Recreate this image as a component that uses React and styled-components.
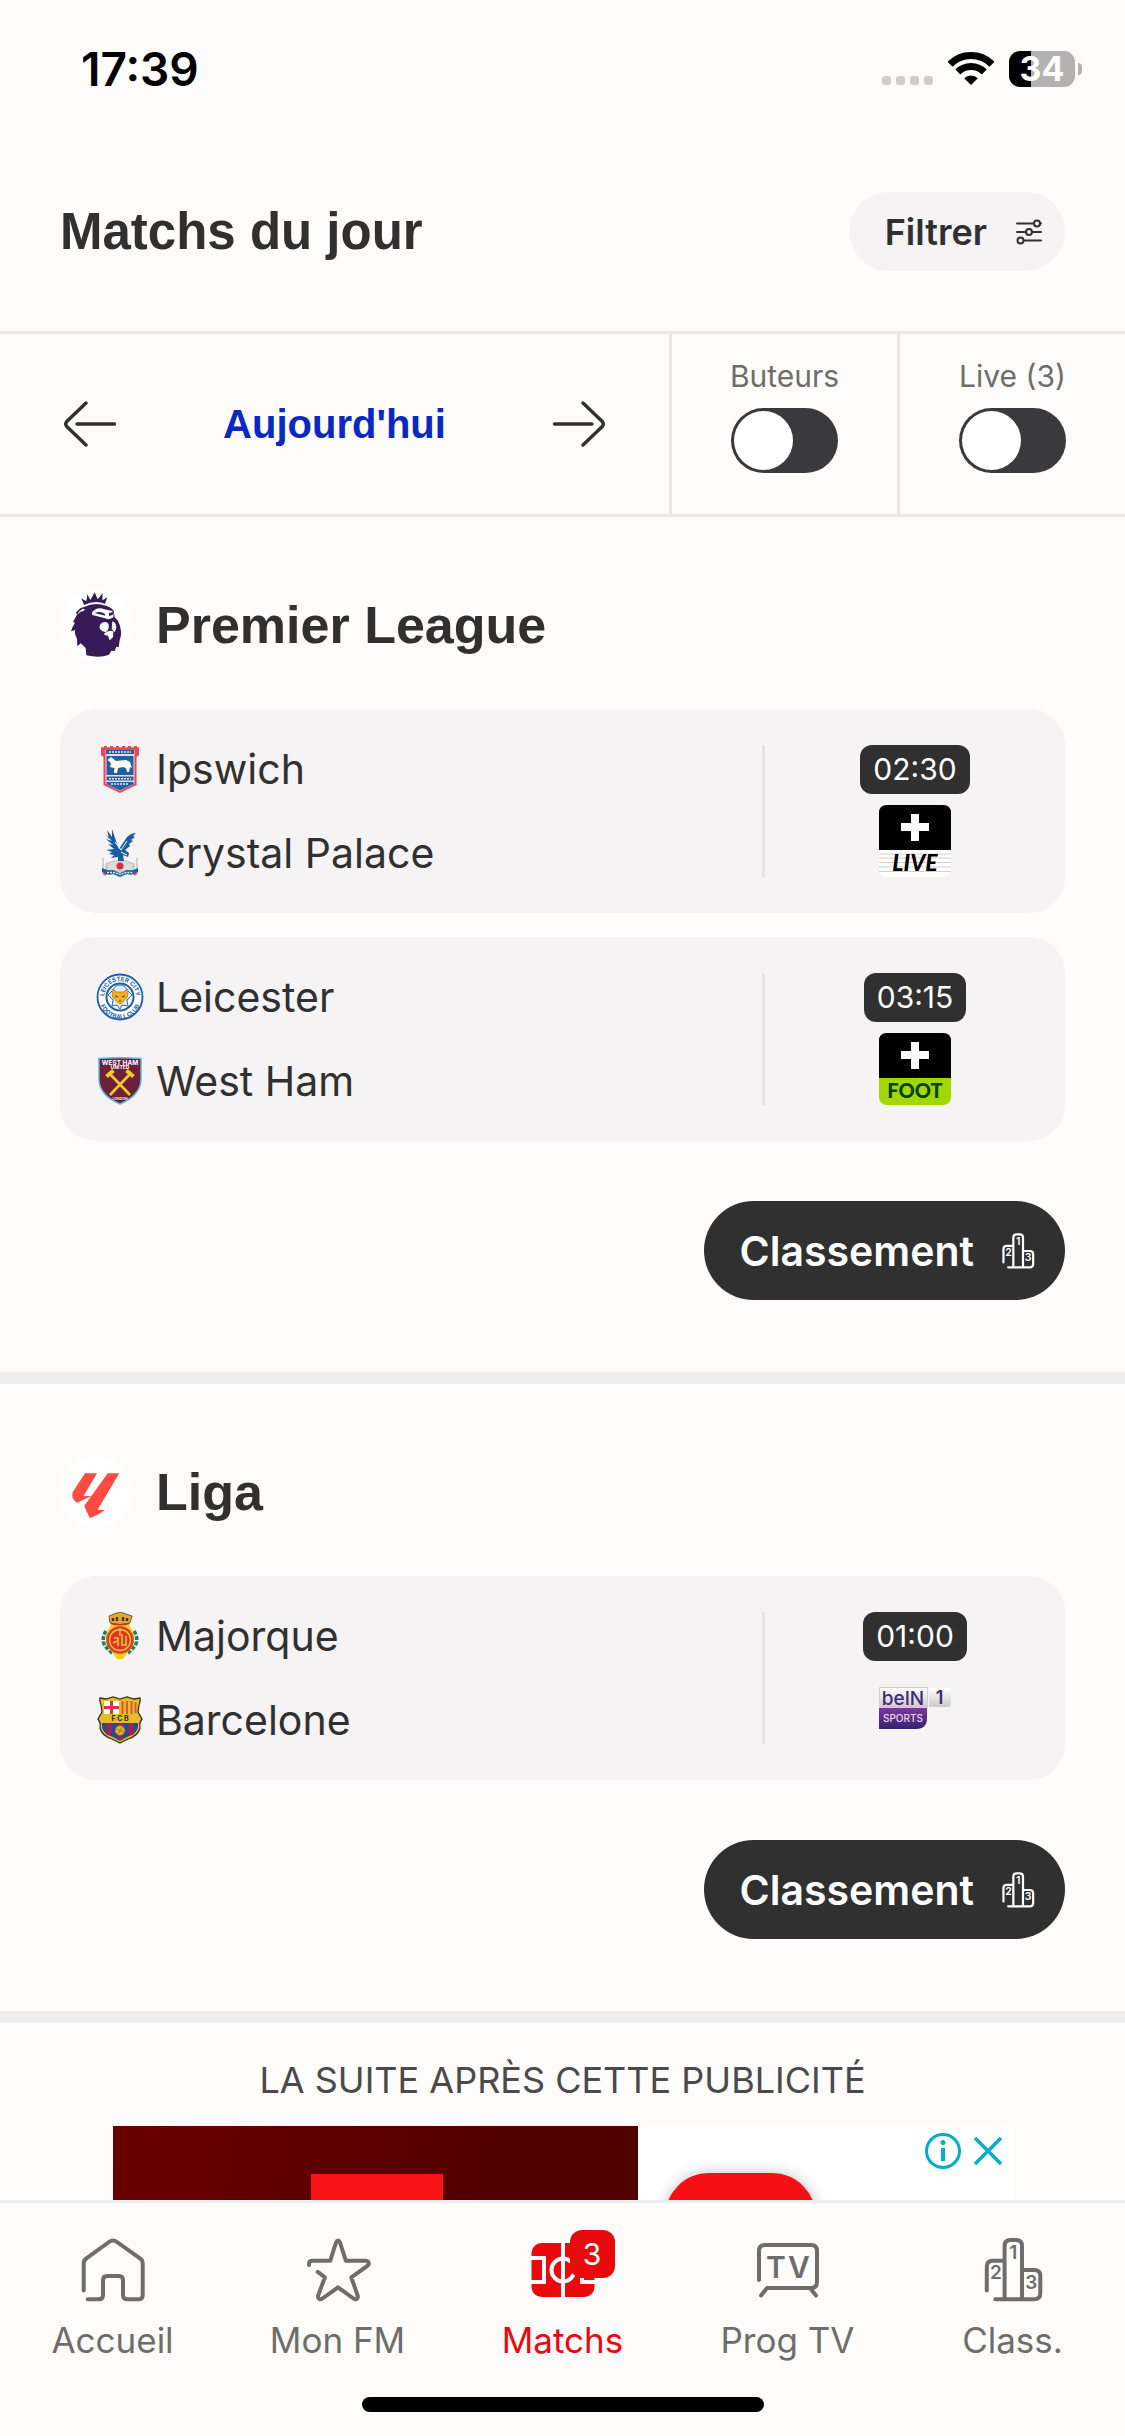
import React, { useState } from "react";
import styled, { createGlobalStyle } from "styled-components";

const ink = "#303030";
const paper = "#fdfcfb";
const card = "#f5f3f4";
const line = "#e8e8e7";
const muted = "#6d6d6c";
const red = "#ea0a0d";
const ui = `Inter, "Liberation Sans", sans-serif`;
const display = `"Liberation Sans", Inter, sans-serif`;

const GlobalStyle = createGlobalStyle`
  *, *::before, *::after { box-sizing: border-box; }
  body { margin: 0; background: ${paper}; color: ${ink}; font-family: ${ui}; }
  button { border: 0; padding: 0; background: none; color: inherit; font: inherit; cursor: pointer; }
  h1, h2, p, ul { margin: 0; padding: 0; }
  a { color: inherit; text-decoration: none; }
  svg { display: block; flex: none; }
`;

const Screen = styled.div`
  display: flex;
  flex-direction: column;
  height: 100vh;
  overflow: hidden;
`;

const StatusBar = styled.div`
  display: flex;
  align-items: center;
  justify-content: space-between;
  flex: none;
  height: 132px;
  padding: 6px 43px 0 81px;
  color: #000;
`;

const Clock = styled.span`
  font-size: 46px;
  font-weight: 600;
`;

const StatusIcons = styled.div`
  display: flex;
  align-items: center;
  gap: 15px;
`;

const Battery = styled.div`
  display: flex;
  align-items: center;
  gap: 3px;

  &::after {
    content: "";
    width: 4px;
    height: 12px;
    border-radius: 0 6px 6px 0;
    background: #b3b1b1;
  }
`;

const BatteryLevel = styled.span`
  width: 66px;
  border-radius: 11px;
  background: linear-gradient(to right, #000 ${(p) => p.$level}%, #b3b1b1 ${(p) => p.$level}%);
  color: #fff;
  font-size: 34px;
  font-weight: 700;
  line-height: 36px;
  text-align: center;
`;

const Header = styled.header`
  display: flex;
  align-items: center;
  justify-content: space-between;
  flex: none;
  padding: 60px;
`;

const PageTitle = styled.h1`
  font-family: ${display};
  font-size: 51px;
  font-weight: 700;
  line-height: 60px;
`;

const FilterButton = styled.button`
  display: flex;
  align-items: center;
  gap: 28px;
  height: 79px;
  padding: 0 22px 0 36px;
  border-radius: 40px;
  background: ${card};
  font-size: 36px;
  font-weight: 600;
`;

const Toolbar = styled.div`
  display: flex;
  flex: none;
  height: 186px;
  border-top: 3px solid ${line};
  border-bottom: 3px solid ${line};
`;

const DatePicker = styled.div`
  display: flex;
  flex: 1;
  align-items: center;
  justify-content: space-between;
  padding: 0 63px;
`;

const CurrentDay = styled.button`
  color: #0a28c2;
  font-family: ${display};
  font-size: 40px;
  font-weight: 700;
`;

const ToggleCell = styled.label`
  display: flex;
  flex-direction: column;
  align-items: center;
  gap: 14px;
  width: 228px;
  padding-top: 24px;
  border-left: 3px solid ${line};
  color: ${muted};
  font-size: 30px;
  line-height: 36px;
`;

const Switch = styled.input`
  appearance: none;
  width: 107px;
  height: 65px;
  margin: 0;
  padding: 3px;
  border-radius: 33px;
  background: #3a3a3c;
  cursor: pointer;

  &::before {
    content: "";
    display: block;
    width: 59px;
    height: 59px;
    border-radius: 50%;
    background: #fff;
  }

  &:checked::before {
    margin-left: auto;
  }
`;

const Feed = styled.main`
  flex: 1;
  min-height: 0;
  overflow: hidden;
`;

const League = styled.section`
  display: flex;
  flex-direction: column;
  padding: 72px 60px;
  border-bottom: 12px solid #eeeeee;
`;

const LeagueHeader = styled.div`
  display: flex;
  align-items: center;
  gap: 24px;
  margin-bottom: 48px;
`;

const LeagueLogo = styled.div`
  width: 72px;
  height: 72px;
  border-radius: 50%;
  background: #fff;
`;

const LeagueName = styled.h2`
  font-family: ${display};
  font-size: 52px;
  font-weight: 700;
  line-height: 60px;
`;

const MatchList = styled.ul`
  display: flex;
  flex-direction: column;
  gap: 24px;
  list-style: none;
`;

const MatchCard = styled.li`
  display: flex;
  padding: 36px 0;
  border-radius: 36px;
  background: ${card};
`;

const Teams = styled.div`
  display: flex;
  flex: 1;
  flex-direction: column;
  gap: 36px;
  padding-left: 36px;
`;

const Team = styled.div`
  display: flex;
  align-items: center;
  gap: 12px;
  height: 48px;
  font-size: 41px;
`;

const Broadcast = styled.div`
  display: flex;
  flex-direction: column;
  align-items: center;
  justify-content: space-between;
  width: 303px;
  border-left: 3px solid #e5e4e5;
`;

const KickOff = styled.time`
  padding: 0 13px;
  border-radius: 12px;
  background: ${ink};
  color: #fff;
  font-size: 30px;
  line-height: 49px;
`;

const StandingsButton = styled.button`
  display: flex;
  align-items: center;
  align-self: flex-end;
  gap: 24px;
  height: 99px;
  margin-top: 60px;
  padding: 0 27px 0 36px;
  border-radius: 50px;
  background: ${ink};
  color: #fff;
  font-size: 41px;
  font-weight: 600;
`;

const AdSection = styled.aside`
  display: flex;
  flex-direction: column;
  align-items: center;
  gap: 24px;
  padding-top: 36px;
`;

const AdNotice = styled.p`
  color: #4a4a4a;
  font-size: 36px;
  line-height: 43px;
`;

const AdBanner = styled.div`
  display: flex;
  width: 900px;
  height: 300px;
  background: #fff;
`;

const AdPoster = styled.div`
  width: 525px;
  padding: 48px 195px 0 198px;
  background: linear-gradient(100deg, #6a0000, #520000 70%);

  &::before {
    content: "";
    display: block;
    height: 132px;
    background: #f81214;
  }
`;

const AdBody = styled.div`
  display: flex;
  flex: 1;
  align-items: flex-start;
  justify-content: space-between;
  padding-left: 27px;
`;

const AdLogo = styled.div`
  width: 151px;
  height: 151px;
  margin-top: 47px;
  border-radius: 44px;
  background: #f51113;
  box-shadow: 0 0 14px rgba(0, 0, 0, 0.25);
`;

const AdControls = styled.div`
  display: flex;
  gap: 12px;
  padding: 7px 10px 0 0;
`;

const BottomNav = styled.nav`
  display: flex;
  flex: none;
  flex-direction: column;
  align-items: center;
  gap: 33px;
  padding: 31px 0 24px;
  border-top: 3px solid #eeeded;
  background: ${paper};
`;

const Tabs = styled.div`
  display: flex;
  align-self: stretch;
`;

const Tab = styled.a`
  display: flex;
  flex: 1;
  flex-direction: column;
  align-items: center;
  gap: 10px;
  color: ${(p) => (p.$active ? red : muted)};
  font-size: 35px;
  line-height: 48px;
`;

const TabIcon = styled.span`
  position: relative;
`;

const Badge = styled.span`
  position: absolute;
  top: -4px;
  left: 43px;
  width: 45px;
  border-radius: 12px;
  background: ${red};
  color: #fff;
  font-size: 30px;
  line-height: 48px;
  text-align: center;
`;

const HomeIndicator = styled.div`
  width: 402px;
  height: 15px;
  border-radius: 8px;
  background: #000;
`;

const IconText = styled.text`
  font-family: ${ui};
  font-weight: ${(p) => p.$weight || 600};
  text-anchor: middle;
`;

const ChannelText = styled.text`
  font-family: Lato, ${ui};
  font-weight: 900;
  text-anchor: middle;
`;

/* ---------- system icons ---------- */

const SignalDots = () => (
  <svg width="51" height="36" viewBox="0 0 51 36" fill="#cfcdcd">
    {[0, 14, 28, 42].map((x) => (
      <rect key={x} x={x} y="25" width="9" height="9" rx="3" />
    ))}
  </svg>
);

const WifiIcon = () => (
  <svg width="46" height="36" viewBox="0 0 46 36" fill="none" stroke="#000" strokeWidth="7">
    <path d="M2 13.2A29.6 29.6 0 0 1 44 13.2" />
    <path d="M9.8 21A18.6 18.6 0 0 1 36.2 21" />
    <path d="M23 34L16.2 27.2A9.6 9.6 0 0 1 29.8 27.2Z" fill="#000" stroke="none" />
  </svg>
);

const SlidersIcon = () => (
  <svg width="28" height="28" viewBox="0 0 28 28" fill="none" stroke={ink} strokeWidth="2" strokeLinecap="round">
    <path d="M2 5.5H18.5M25.5 5.5H26M2 14H10.5M17.5 14H26M9.5 22.5H26" />
    <circle cx="22" cy="5.5" r="3" />
    <circle cx="14" cy="14" r="3" />
    <circle cx="5.5" cy="22.5" r="3" />
  </svg>
);

const ArrowIcon = ({ flip }) => (
  <svg width="54" height="48" viewBox="0 0 54 48" fill="none" stroke={ink} strokeWidth="3.4" strokeLinecap="round">
    <g transform={flip ? "matrix(-1 0 0 1 54 0)" : undefined}>
      <path d="M23 3L4 21.3Q1.4 24 4 26.7L23 45M14 24H51.500" />
    </g>
  </svg>
);

/* ---------- navigation icons ---------- */

const stroke = { fill: "none", stroke: "currentColor", strokeWidth: 4, strokeLinecap: "round", strokeLinejoin: "round" };

const HomeIcon = () => (
  <svg width="72" height="72" viewBox="0 0 72 72" {...stroke}>
    <path d="M6.700 56.600V29.500Q6.700 26.500 9 24.700L32 8Q36 5 40 8L63.300 24.700Q65.700 26.500 65.700 29.500V61Q65.700 65.300 61.400 65.300H50.300Q46 65.300 46 61V46.300Q46 42 41.700 42H30.300Q26 42 26 46.300V61Q26 65.300 21.700 65.300H10.700" />
  </svg>
);

const StarIcon = () => (
  <svg width="72" height="72" viewBox="0 0 72 72" {...stroke}>
    <path d="M7 31V30Q7 26.700 10.500 26.700H28.300L34 8.500Q36 4.500 38 8.500L43.800 26.700H63.500Q67 27 66.800 30Q66.600 31 64.500 32.500L49.300 43.300L55.800 62Q56 67 51.500 64.500L36 53.300L20.500 64.500Q16 67 16 62L22.900 43.300L15.700 37.800" />
  </svg>
);

const PitchIcon = () => (
  <svg width="72" height="72" viewBox="0 0 72 72">
    <rect x="4.500" y="9" width="63" height="54" rx="10" fill={red} />
    <g fill="none" stroke={paper} strokeWidth="4">
      <path d="M36 8V64M4 24H17V48H4M68 24H55V48H68" />
      <circle cx="36" cy="36" r="11.500" />
    </g>
  </svg>
);

const TvIcon = () => (
  <svg width="72" height="72" viewBox="0 0 72 72" {...stroke}>
    <path d="M7 46V17Q7 11 13 11H59Q65 11 65 17V48Q65 54 59 54H15L9 61.500M58 54L64 61.500" />
    <g fill="currentColor" stroke="none" fontSize="30">
      <IconText x="24" y="44">T</IconText>
      <IconText x="47" y="44">V</IconText>
    </g>
  </svg>
);

const PodiumIcon = ({ size = 72 }) => (
  <svg width={size} height={size} viewBox="0 0 72 72" {...stroke}>
    <path d="M9.800 56.500V32.700Q9.800 26.700 15.800 26.700H27.600M27.600 65.300V12Q27.600 6 33.600 6H39Q45 6 45 12V65.300M45 36H57.300Q63.300 36 63.300 42V59.300Q63.300 65.300 57.300 65.300H18.300" />
    <g fill="currentColor" stroke="none" fontSize="19">
      <IconText x="36.300" y="25">1</IconText>
      <IconText x="18.800" y="45">2</IconText>
      <IconText x="54.200" y="54.500">3</IconText>
    </g>
  </svg>
);

/* ---------- league logos ---------- */

const PremierLeagueLogo = () => (
  <svg width="72" height="72" viewBox="30 27 216 216">
    <g fill="#371b58">
      <path d="M102 75L94 55L109 64L112 43L121 60L134 37L143 58L158 40L157 61L172 52L165 71Q134 59 102 75Z" />
      <path d="M104 80Q134 66 168 77Q184 82 191 92L194 112L204 122Q215 146 213 166L209 181L206 202L199 200L194 213L184 212L177 224Q150 235 109 226L107 204L92 190L82 199L81 176L75 162V150L63 154Q67 139 75 128L69 126L82 102L77 98L92 84Z" />
    </g>
    <g fill="#fff">
      <path d="M131 92Q145 80 163 88L187 93Q193 103 190 112Q178 121 165 115L142 109L127 105Q122 97 131 92Z" />
      <path d="M151 133Q163 121 174 130Q179 138 174 150L167 157Q156 156 151 148Q146 140 151 133Z" />
      <path d="M187 124Q198 126 199 144L194 157L185 147Z" />
      <path d="M163 160Q176 149 190 154L189 172L179 181L174 167L163 164Z" />
      <path d="M98 86L105 88L100 93L92 95L83 103L86 96Z" />
    </g>
    <path d="M134 99Q151 92 164 101L166 107L149 103ZM177 99L190 96L188 105L177 108Z" fill="#371b58" />
  </svg>
);

const LigaLogo = () => (
  <svg width="72" height="72" viewBox="0 0 72 72" fill="#ff4b44">
    <path d="M25 17.300H37L23.500 40H31.500L25 43L17.200 46.700Q11 43 12.500 36.500Z" />
    <path d="M47.700 17.300H59.200L37.500 54H45L38 58.500L29.800 62.300L24.400 50.600Q24.500 48.500 26.200 47.300Z" />
  </svg>
);

/* ---------- club crests ---------- */

const IpswichCrest = () => (
  <svg width="48" height="48" viewBox="0 0 48 48">
    <path d="M5 1H43V10L40.500 12V40L24 48L7.500 40V12L5 10Z" fill="#ef4358" />
    <path d="M5 1.500H43" stroke="#fff" strokeWidth="1.500" strokeDasharray="3 3" />
    <path d="M9.500 5H38.500V38.500L24 46L9.500 38.500Z" fill="#f6d6dc" />
    <path d="M10 5H38V9H10ZM10.500 11H37.500V30H10.500ZM10.500 31.500H37.500V35.500H10.500ZM10.500 37H37.500V39L24 45.500L10.500 39Z" fill="#2260a5" />
    <path d="M11.500 15L15 12L20 16L30 15L34 17L36 23L34 22L33 27H31L30 23L27 22L22 23L21 28H18L18.500 23L14 22L15 18Z" fill="#fff" />
    <path d="M13 7H35M13 33.700H35M15 39H33" stroke="#dce9f5" strokeWidth="1.500" strokeDasharray="2 1" />
  </svg>
);

const CrystalPalaceCrest = () => (
  <svg width="48" height="48" viewBox="0 0 48 48">
    <path d="M7 29V40M11 34V40M37 34V40M41 29V40M10 35Q24 28 38 35V42H10Z" fill="#dedbdc" stroke="#c9c6c8" strokeWidth="1.500" />
    <g fill="#1b5b9f">
      <path d="M9 5L13 10L11 1L16 8L16 0L20 12L23 20L29 11Q33 4 40 4L37 7L39 8L35 11L37 12L33 15L34 17L29 21L33 24L32 28L27 26L28 32H22V28L15 29L18 26L13 25L16 23L10 21L18 20L12 15L17 16L10 10L16 12Z" />
      <path d="M6 39Q12 42 17 41L24 44L31 41Q37 42 42 39V43Q36 47 31 45L24 48L17 45Q11 47 6 43Z" />
    </g>
    <path d="M19 13L25 21L31 12M25 23L31 26" fill="none" stroke="#fff" strokeWidth="1" />
    <circle cx="24" cy="37" r="3.500" fill="#dc2c3b" />
    <path d="M11 43.500H18L24 45.500L30 43.500H37" fill="none" stroke="#e6eef8" strokeWidth="1.400" strokeDasharray="2 1" />
    <path d="M7 44L10 46M38 46L41 44" stroke="#e34a55" strokeWidth="2" />
  </svg>
);

const LeicesterCrest = () => (
  <svg width="48" height="48" viewBox="0 0 48 48">
    <defs>
      <path id="leicester-top" d="M8 24A16 16 0 0 1 40 24" />
      <path id="leicester-bottom" d="M3.200 25A20.800 20.800 0 0 0 44.800 25" />
    </defs>
    <circle cx="24" cy="24" r="22.500" fill="#fff" stroke="#1c5fae" strokeWidth="1.800" />
    <circle cx="24" cy="24" r="13.500" fill="#fff" stroke="#1c5fae" strokeWidth="2" />
    <path d="M24 12Q29 12 31 17L36 22L31 27L32 33L26 32L24 36L21 32L16 33L17 27L12 22L17 17Q19 12 24 12Z" fill="#dbe8f5" stroke="#2a68b0" strokeWidth="1" />
    <path d="M16 16L21 19H27L32 16L31.500 24L27 29L24 31L21 29L16.500 24Z" fill="#eeb01d" stroke="#a36c1a" strokeWidth="0.600" />
    <path d="M19 23L22 24M29 23L26 24M23 28H25" stroke="#5c3f1d" strokeWidth="1" />
    <g fill="#1c5fae" fontSize="6">
      <IconText $weight={700}><textPath href="#leicester-top" startOffset="50%">LEICESTER CITY</textPath></IconText>
      <IconText $weight={700}><textPath href="#leicester-bottom" startOffset="50%">FOOTBALL CLUB</textPath></IconText>
    </g>
  </svg>
);

const WestHamCrest = () => (
  <svg width="48" height="48" viewBox="0 0 48 48">
    <path d="M3 1.500Q24 0 45 1.500V22Q45 38 24 47Q3 38 3 22Z" fill="#6d2038" stroke="#5fb5e2" strokeWidth="1.500" />
    <path d="M14 17L34 38M34 17L14 38" stroke="#f3c92b" strokeWidth="2.600" />
    <path d="M10.500 19.500L17.500 13.500M37.500 19.500L30.500 13.500" stroke="#f3c92b" strokeWidth="4" />
    <g fill="#fff">
      <IconText x="24" y="7.500" fontSize="6.500" $weight={700}>WEST HAM</IconText>
      <IconText x="24" y="12" fontSize="5" $weight={700}>UNITED</IconText>
      <IconText x="24" y="42.500" fontSize="3.500">LONDON</IconText>
    </g>
  </svg>
);

const MajorqueCrest = () => (
  <svg width="48" height="48" viewBox="0 0 48 48">
    <path d="M10 19Q5 27 9 34L17 42M38 19Q43 27 39 34L31 42" fill="none" stroke="#217d55" strokeWidth="3.500" strokeDasharray="4 1.500" />
    <path d="M16 11Q24 15 32 11L36 18Q42 30 32 40L27 47H21L16 40Q6 30 12 18Z" fill="#f2cf25" />
    <circle cx="24" cy="28" r="13.500" fill="#e5312b" stroke="#c9511f" strokeWidth="0.800" />
    <circle cx="24" cy="28" r="10.500" fill="none" stroke="#f4c62a" strokeWidth="1.500" />
    <path d="M18 26H22V34M26 22V33H30V24M24 16V24M17 31L21 29" fill="none" stroke="#f4c62a" strokeWidth="1.600" />
    <path d="M13 4L18 2L24 0L30 2L36 4L34 11Q24 14 14 11Z" fill="#d8af2f" stroke="#594019" strokeWidth="0.800" />
    <path d="M17 6V9M21 5V9M27 5V9M31 6V9" stroke="#6b1f24" strokeWidth="2.400" />
    <path d="M15 11.500Q24 14 33 11.500" fill="none" stroke="#c93125" strokeWidth="1.500" />
  </svg>
);

const BarceloneCrest = () => (
  <svg width="48" height="48" viewBox="0 0 48 48">
    <path d="M4 2L10 3L17 1L24 3L31 1L38 3L44 2Q45 5 43 9L42 16L46 23Q43 27 44 32Q42 40 32 43L24 47L16 43Q6 40 4 32Q5 27 2 23L6 16L5 9Q3 5 4 2Z" fill="#e5bc30" stroke="#35321c" strokeWidth="1.300" />
    <path d="M8 5L23 5V18H8Z" fill="#fff" />
    <path d="M15.500 5V18M8 11.500H23" stroke="#df3446" strokeWidth="3" />
    <path d="M26.500 5V18M31 5V18M35.500 5V18M39.500 6V17" stroke="#e4572e" strokeWidth="2" />
    <path d="M6 27H42V31Q41 38 31 41L24 45L17 41Q7 38 6 31Z" fill="#24489b" />
    <path d="M13 27V39M24 27V44M35 27V39" stroke="#a12349" strokeWidth="5" />
    <circle cx="24" cy="34.500" r="5" fill="#dfb329" stroke="#7b6420" strokeWidth="0.700" />
    <path d="M20 33L28 36M22 38L26 31" stroke="#8c6d1b" strokeWidth="0.700" />
    <IconText x="24" y="25.300" fontSize="7" fill="#2f2a14" $weight={700}>F C B</IconText>
  </svg>
);

/* ---------- channel logos ---------- */

const CanalLiveLogo = () => (
  <svg width="72" height="72" viewBox="0 0 72 72">
    <rect width="72" height="72" rx="8" fill="#fff" />
    <path d="M0 49H72M0 53H72M0 57.500H72M0 62H72M0 66.500H72" stroke="#cfcfcf" strokeWidth="1.200" />
    <path d="M0 45V8Q0 0 8 0H64Q72 0 72 8V45Z" fill="#000" />
    <path d="M32 9H40V18H50V26H40V36H32V26H22V18H32Z" fill="#fff" />
    <ChannelText x="36" y="66" fontSize="23" fontStyle="italic">LIVE</ChannelText>
  </svg>
);

const CanalFootLogo = () => (
  <svg width="72" height="72" viewBox="0 0 72 72">
    <rect width="72" height="72" rx="8" fill="#a1d800" />
    <path d="M0 45V8Q0 0 8 0H64Q72 0 72 8V45Z" fill="#000" />
    <path d="M32 9H40V18H50V26H40V36H32V26H22V18H32Z" fill="#fff" />
    <ChannelText x="36" y="65" fontSize="20" fill="#093f12">FOOT</ChannelText>
  </svg>
);

const BeinLogo = () => (
  <svg width="72" height="72" viewBox="0 0 72 72">
    <defs>
      <linearGradient id="bein-silver" x1="0" y1="0" x2="0" y2="1">
        <stop offset="0" stopColor="#fff" />
        <stop offset="1" stopColor="#c9c8cb" />
      </linearGradient>
      <linearGradient id="bein-violet" x1="0" y1="0" x2="0" y2="1">
        <stop offset="0" stopColor="#7b3a9b" />
        <stop offset="1" stopColor="#33236c" />
      </linearGradient>
    </defs>
    <path d="M0.500 15.500H48.500V36H0.500Z" fill="url(#bein-silver)" stroke="#cfcdd0" />
    <path d="M0 36H48V46Q48 57 37 57H0Z" fill="url(#bein-violet)" />
    <path d="M50 16H72V31Q72 35 68 35H50Z" fill="url(#bein-silver)" />
    <g fill="#3d2b7c">
      <IconText x="24" y="32.500" fontSize="19" $weight={500}>beIN</IconText>
      <IconText x="60.500" y="32" fontSize="18" $weight={600}>1</IconText>
    </g>
    <IconText x="24" y="50" fontSize="10" fill="#e9d9f2" $weight={500}>SPORTS</IconText>
  </svg>
);

const leagues = [
  {
    name: "Premier League",
    logo: <PremierLeagueLogo />,
    matches: [
      { home: ["Ipswich", <IpswichCrest />], away: ["Crystal Palace", <CrystalPalaceCrest />], time: "02:30", channel: <CanalLiveLogo /> },
      { home: ["Leicester", <LeicesterCrest />], away: ["West Ham", <WestHamCrest />], time: "03:15", channel: <CanalFootLogo /> },
    ],
  },
  {
    name: "Liga",
    logo: <LigaLogo />,
    matches: [
      { home: ["Majorque", <MajorqueCrest />], away: ["Barcelone", <BarceloneCrest />], time: "01:00", channel: <BeinLogo /> },
    ],
  },
];

const tabs = [
  { label: "Accueil", icon: <HomeIcon /> },
  { label: "Mon FM", icon: <StarIcon /> },
  { label: "Matchs", icon: <PitchIcon />, active: true, badge: 3 },
  { label: "Prog TV", icon: <TvIcon /> },
  { label: "Class.", icon: <PodiumIcon /> },
];

function Match({ home, away, time, channel }) {
  return (
    <MatchCard>
      <Teams>
        {[home, away].map(([name, crest]) => (
          <Team key={name}>
            {crest}
            <span>{name}</span>
          </Team>
        ))}
      </Teams>
      <Broadcast>
        <KickOff>{time}</KickOff>
        {channel}
      </Broadcast>
    </MatchCard>
  );
}

function Toggle({ label }) {
  const [on, setOn] = useState(false);
  return (
    <ToggleCell>
      {label}
      <Switch type="checkbox" role="switch" checked={on} onChange={() => setOn(!on)} />
    </ToggleCell>
  );
}

export default function App() {
  return (
    <Screen>
      <GlobalStyle />
      <StatusBar>
        <Clock>17:39</Clock>
        <StatusIcons>
          <SignalDots />
          <WifiIcon />
          <Battery>
            <BatteryLevel $level={34}>34</BatteryLevel>
          </Battery>
        </StatusIcons>
      </StatusBar>

      <Header>
        <PageTitle>Matchs du jour</PageTitle>
        <FilterButton type="button">
          Filtrer
          <SlidersIcon />
        </FilterButton>
      </Header>

      <Toolbar>
        <DatePicker>
          <button type="button" aria-label="Jour précédent"><ArrowIcon /></button>
          <CurrentDay type="button">Aujourd'hui</CurrentDay>
          <button type="button" aria-label="Jour suivant"><ArrowIcon flip /></button>
        </DatePicker>
        <Toggle label="Buteurs" />
        <Toggle label="Live (3)" />
      </Toolbar>

      <Feed>
        {leagues.map((league) => (
          <League key={league.name}>
            <LeagueHeader>
              <LeagueLogo>{league.logo}</LeagueLogo>
              <LeagueName>{league.name}</LeagueName>
            </LeagueHeader>
            <MatchList>
              {league.matches.map((match) => (
                <Match key={match.time} {...match} />
              ))}
            </MatchList>
            <StandingsButton type="button">
              Classement
              <PodiumIcon size={40} />
            </StandingsButton>
          </League>
        ))}

        <AdSection>
          <AdNotice>LA SUITE APRÈS CETTE PUBLICITÉ</AdNotice>
          <AdBanner>
            <AdPoster />
            <AdBody>
              <AdLogo />
              <AdControls>
                <button type="button" aria-label="À propos de cette annonce">
                  <svg width="36" height="36" viewBox="0 0 36 36" fill="none" stroke="#00aecd" strokeWidth="3">
                    <circle cx="18" cy="18" r="16.500" />
                    <path d="M18 15V28" strokeWidth="4" />
                    <circle cx="18" cy="9.500" r="2.500" fill="#00aecd" stroke="none" />
                  </svg>
                </button>
                <button type="button" aria-label="Fermer l'annonce">
                  <svg width="30" height="36" viewBox="0 0 30 36" fill="none" stroke="#00aecd" strokeWidth="3.500">
                    <path d="M2 5L28 31M28 5L2 31" />
                  </svg>
                </button>
              </AdControls>
            </AdBody>
          </AdBanner>
        </AdSection>
      </Feed>

      <BottomNav>
        <Tabs>
          {tabs.map((tab) => (
            <Tab key={tab.label} href="#" $active={tab.active} aria-current={tab.active ? "page" : undefined}>
              <TabIcon>
                {tab.icon}
                {tab.badge && <Badge>{tab.badge}</Badge>}
              </TabIcon>
              {tab.label}
            </Tab>
          ))}
        </Tabs>
        <HomeIndicator />
      </BottomNav>
    </Screen>
  );
}
